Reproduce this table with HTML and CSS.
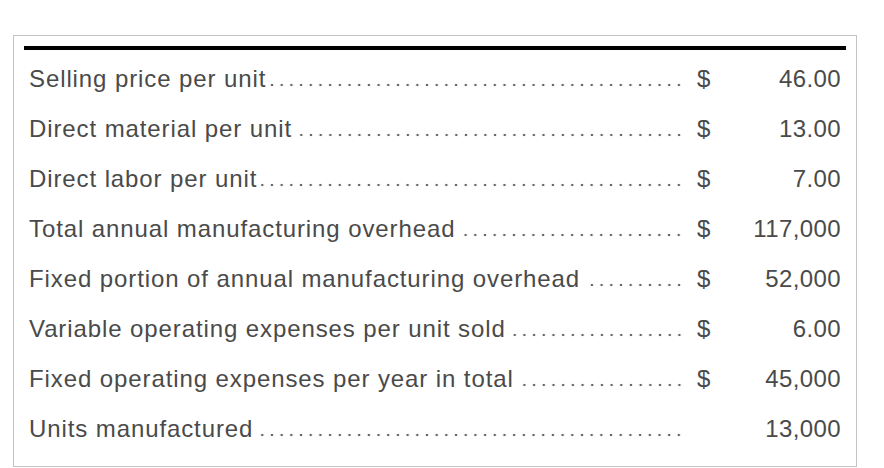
FILE: index.html
```html
<!DOCTYPE html>
<html lang="en">
<head>
    <meta charset="UTF-8">
    <title>Cost data</title>
    <link rel="stylesheet" href="styles.css">
</head>
<body>
    <section class="panel">
        <div class="rule"></div>
        <div class="rows">
            <div class="row">
                <div class="label"><span>Selling price per unit</span><span class="dots"></span></div>
                <div class="cur">$</div>
                <div class="amt">46.00</div>
            </div>
            <div class="row">
                <div class="label"><span>Direct material per unit</span><span class="dots"></span></div>
                <div class="cur">$</div>
                <div class="amt">13.00</div>
            </div>
            <div class="row">
                <div class="label"><span>Direct labor per unit</span><span class="dots"></span></div>
                <div class="cur">$</div>
                <div class="amt">7.00</div>
            </div>
            <div class="row">
                <div class="label"><span>Total annual manufacturing overhead</span><span class="dots"></span></div>
                <div class="cur">$</div>
                <div class="amt">117,000</div>
            </div>
            <div class="row">
                <div class="label"><span>Fixed portion of annual manufacturing overhead</span><span class="dots"></span></div>
                <div class="cur">$</div>
                <div class="amt">52,000</div>
            </div>
            <div class="row">
                <div class="label"><span>Variable operating expenses per unit sold</span><span class="dots"></span></div>
                <div class="cur">$</div>
                <div class="amt">6.00</div>
            </div>
            <div class="row">
                <div class="label"><span>Fixed operating expenses per year in total</span><span class="dots"></span></div>
                <div class="cur">$</div>
                <div class="amt">45,000</div>
            </div>
            <div class="row">
                <div class="label"><span>Units manufactured</span><span class="dots"></span></div>
                <div class="cur"></div>
                <div class="amt">13,000</div>
            </div>
        </div>
    </section>
</body>
</html>
```
FILE: styles.css
```css
body {
    margin: 0;
    background: #fff;
    font-family: "Liberation Sans", Arial, sans-serif;
    color: #4a4a4a;
}

.panel {
    margin: 35px 0 0 13px;
    width: 822px;
    height: 420px;
    border: 1px solid #c4c4c4;
    padding: 10px 10px 0 10px;
}

.rule {
    height: 4px;
    background: #000;
}

.rows {
    padding: 4px 5px 0 5px;
}

.row {
    display: grid;
    grid-template-columns: 1fr 40px 104px;
    height: 50px;
    align-items: center;
    font-size: 24px;
    letter-spacing: 0.9px;
}

.label {
    display: flex;
    align-items: baseline;
    white-space: nowrap;
}

.dots {
    flex: 1;
    height: 4px;
    margin: 0 13px 0 4px;
    background-image: radial-gradient(circle, #666 1.2px, transparent 1.6px);
    background-size: 9.7px 4px;
    background-position: right center;
    background-repeat: repeat-x;
}

.cur {
    text-align: left;
}

.amt {
    text-align: right;
    letter-spacing: 0.4px;
}
```
